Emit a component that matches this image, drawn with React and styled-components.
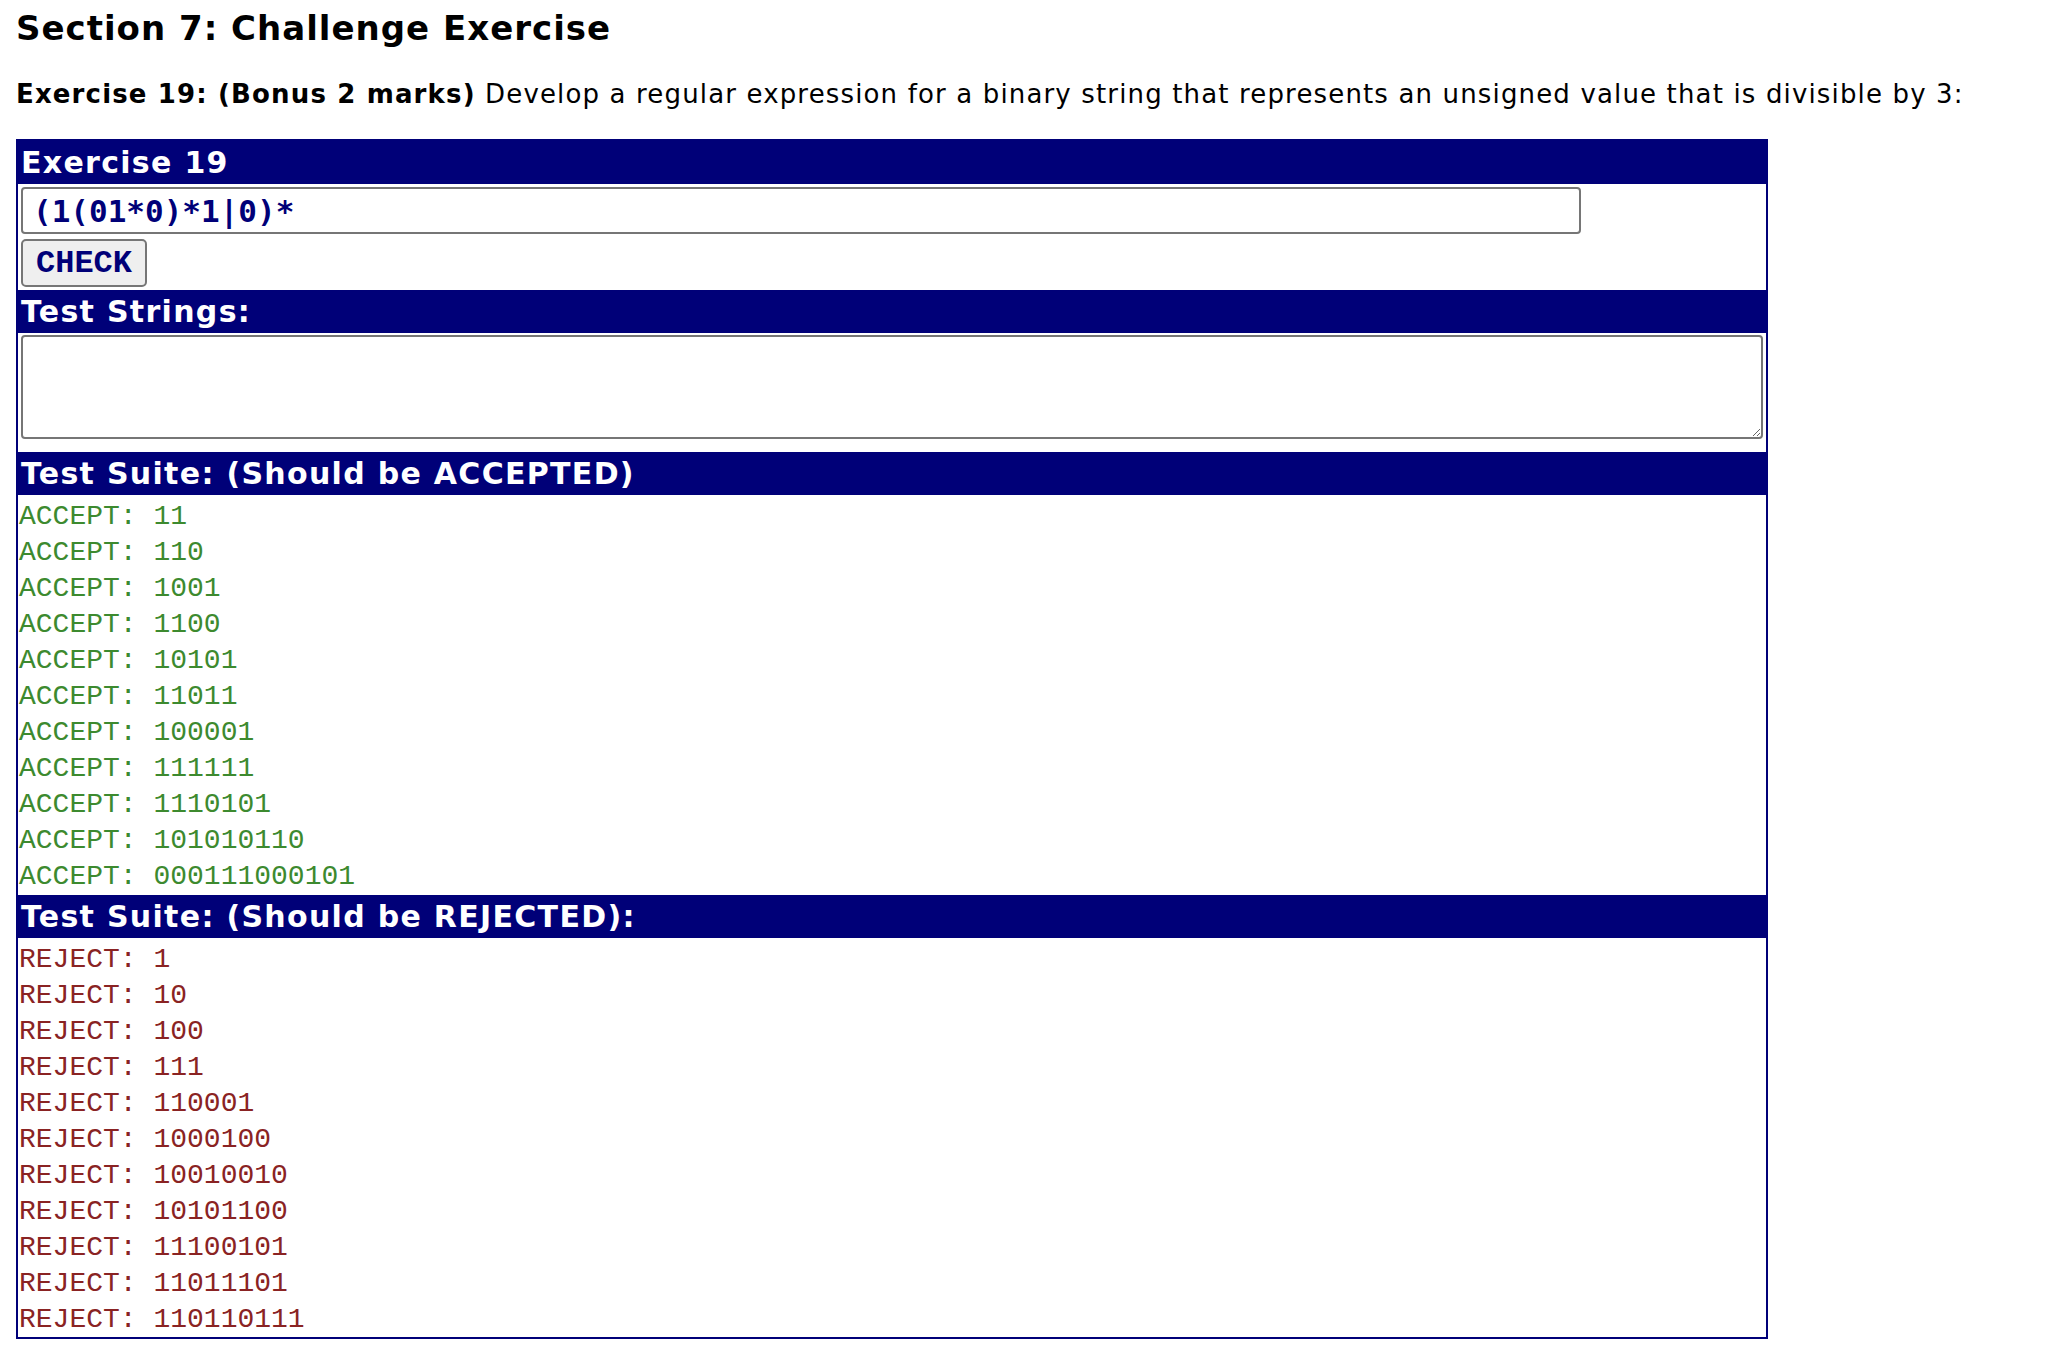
import React from "react";
import styled, { createGlobalStyle } from "styled-components";

const accepted = [
  "11",
  "110",
  "1001",
  "1100",
  "10101",
  "11011",
  "100001",
  "111111",
  "1110101",
  "101010110",
  "000111000101",
];

const rejected = [
  "1",
  "10",
  "100",
  "111",
  "110001",
  "1000100",
  "10010010",
  "10101100",
  "11100101",
  "11011101",
  "110110111",
];

function App() {
  return (
    <Page>
      <GlobalStyle />
      <Title>Section 7: Challenge Exercise</Title>
      <Intro>
        <b>Exercise 19: (Bonus 2 marks)</b> Develop a regular expression for a
        binary string that represents an unsigned value that is divisible by 3:
      </Intro>
      <Panel>
        <Header>Exercise 19</Header>
        <FormArea>
          <RegexInput type="text" defaultValue="(1(01*0)*1|0)*" />
          <CheckButton type="button">CHECK</CheckButton>
        </FormArea>
        <Header>Test Strings:</Header>
        <TextArea>
          <TestStrings />
        </TextArea>
        <Header>Test Suite: (Should be ACCEPTED)</Header>
        <SuiteList>
          {accepted.map((s) => (
            <SuiteLine key={s} $ok>
              ACCEPT: {s}
            </SuiteLine>
          ))}
        </SuiteList>
        <Header>Test Suite: (Should be REJECTED):</Header>
        <SuiteList $last>
          {rejected.map((s) => (
            <SuiteLine key={s}>REJECT: {s}</SuiteLine>
          ))}
        </SuiteList>
      </Panel>
    </Page>
  );
}

const navy = "#000078";

const GlobalStyle = createGlobalStyle`
  body {
    margin: 0;
    background: #fff;
    font-family: "DejaVu Sans", Verdana, sans-serif;
    color: #000;
  }
`;

const Page = styled.div`
  padding: 0 16px 16px;
`;

const Title = styled.h2`
  margin: 0;
  padding-top: 4px;
  font-size: 34px;
  letter-spacing: 1px;
  line-height: 48px;
  height: 52px;
  box-sizing: border-box;
  font-weight: bold;
`;

const Intro = styled.p`
  margin: 0;
  padding-top: 22px;
  font-size: 26px;
  letter-spacing: 1.15px;
  line-height: 40px;
  height: 87px;
  box-sizing: border-box;
  white-space: nowrap;
`;

const Panel = styled.div`
  width: 1752px;
  box-sizing: border-box;
  border: 2px solid ${navy};
`;

const Header = styled.div`
  background: ${navy};
  color: #fff;
  font-weight: bold;
  font-size: 30px;
  letter-spacing: 1.3px;
  height: 43px;
  line-height: 43px;
  padding-left: 3px;
  white-space: nowrap;
`;

const FormArea = styled.div`
  display: flex;
  flex-direction: column;
  align-items: flex-start;
  gap: 5px;
  padding: 3px 0 3px 3px;
`;

const RegexInput = styled.input`
  width: 1560px;
  height: 47px;
  box-sizing: border-box;
  margin: 0;
  border: 2px solid #767676;
  border-radius: 4px;
  padding: 0 0 0 10px;
  font-family: "DejaVu Sans Mono", "Liberation Mono", monospace;
  font-weight: bold;
  font-size: 31px;
  color: ${navy};
  outline: none;
`;

const CheckButton = styled.button`
  width: 126px;
  height: 48px;
  box-sizing: border-box;
  margin: 0;
  background: #efefef;
  border: 2px solid #767676;
  border-radius: 5px;
  padding: 0;
  font-family: "Liberation Mono", "Courier New", monospace;
  font-weight: bold;
  font-size: 32px;
  color: ${navy};
`;

const TextArea = styled.div`
  padding: 2px 3px 13px;
`;

const TestStrings = styled.textarea`
  display: block;
  width: 100%;
  height: 104px;
  box-sizing: border-box;
  margin: 0;
  border: 2px solid #767676;
  border-radius: 4px;
  font-family: "Liberation Mono", monospace;
  font-size: 26px;
  outline: none;
`;

const SuiteList = styled.div`
  padding: ${(p) => (p.$last ? "2px 0 1px" : "2px 0")};
`;

const SuiteLine = styled.div`
  font-family: "Liberation Mono", "Courier New", monospace;
  font-size: 28px;
  line-height: 33px;
  height: 36px;
  padding: 3px 0 0 1px;
  box-sizing: border-box;
  white-space: pre;
  color: ${(p) => (p.$ok ? "#3d8a2f" : "#8a2323")};
`;

export default App;
